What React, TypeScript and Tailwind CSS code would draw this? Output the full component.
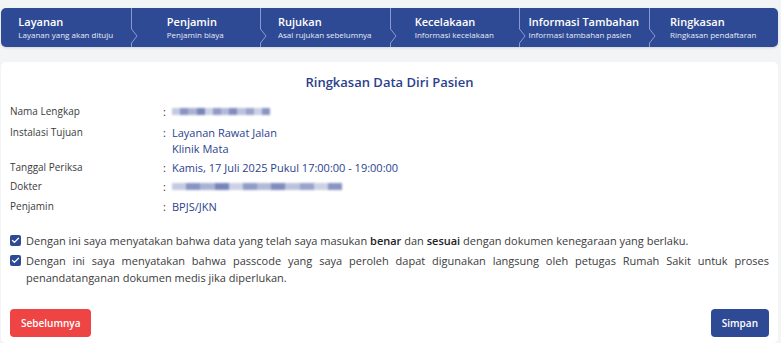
import { Check } from 'lucide-react';

const STEPS = [
  { title: 'Layanan', desc: 'Layanan yang akan dituju' },
  { title: 'Penjamin', desc: 'Penjamin biaya' },
  { title: 'Rujukan', desc: 'Asal rujukan sebelumnya' },
  { title: 'Kecelakaan', desc: 'Informasi kecelakaan' },
  { title: 'Informasi Tambahan', desc: 'Informasi tambahan pasien' },
  { title: 'Ringkasan', desc: 'Ringkasan pendaftaran' },
];

const Blurred = ({ width }: { width: number }) => {
  // blurred personal data placeholder
  const blocks = [0.35, 0.7, 0.5, 0.8, 0.3, 0.65, 0.45, 0.75, 0.4, 0.6, 0.3, 0.7];
  return (
    <div className="flex h-[7px] items-center blur-[1px]" style={{ width }}>
      {blocks.map((o, i) => (
        <div key={i} className="h-full flex-1 bg-[#5566a8]" style={{ opacity: o }} />
      ))}
    </div>
  );
};

const Row = ({ label, children, className = '' }: { label: string; children: React.ReactNode; className?: string }) => (
  <div className={`flex items-start ${className}`}>
    <div className="w-[153px] shrink-0 text-[10px] leading-[19px] text-[#3b3b3b]">{label}</div>
    <div className="w-[9px] shrink-0 text-[11px] leading-[19px] text-[#333]">:</div>
    <div className="flex min-h-[19px] flex-col justify-center text-[11px] font-medium leading-[19px] text-[#2b3f8e]">
      {children}
    </div>
  </div>
);

const CheckBox = () => (
  <span className="mt-[1px] flex h-[11px] w-[11px] shrink-0 items-center justify-center rounded-[2px] bg-[#2f4a94]">
    <Check className="h-[9px] w-[9px] text-white" strokeWidth={3.5} />
  </span>
);

export default function App() {
  return (
    <div className="min-h-[343px] bg-[#f3f4f6] px-[1px] pt-[8px] font-['Open_Sans',sans-serif]">
      {/* Stepper */}
      <div className="mr-[2px] flex h-[39px] overflow-hidden rounded-[5px] bg-[#2f4a94] shadow-sm">
        {STEPS.map((s, i) => (
          <div key={s.title} className="relative flex flex-1 items-center justify-center">
            {i > 0 && (
              <svg className="absolute left-0 top-0 h-[39px] w-[8px]" viewBox="0 0 8 39">
                <path d="M0.5 0 V21 L6 28 L0.5 35 V39" fill="none" stroke="#8a9ad0" strokeWidth="1" />
              </svg>
            )}
            <div className="text-left text-white">
              <div className="text-[11px] font-semibold leading-[14px]">{s.title}</div>
              <div className="text-[8px] leading-[11px] text-[#e6eaf7]">{s.desc}</div>
            </div>
          </div>
        ))}
      </div>

      {/* Card */}
      <div className="mr-[2px] mt-[15px] rounded-[5px] bg-white px-[9px] pb-[6px] pt-[11px]">
        <h2 className="text-center text-[13px] font-semibold leading-[18px] text-[#2b3f8e]">
          Ringkasan Data Diri Pasien
        </h2>

        <div className="mt-[11px] flex flex-col">
          <Row label="Nama Lengkap" className="mb-[2px]">
            <Blurred width={98} />
          </Row>
          <Row label="Instalasi Tujuan" className="pb-[2px]">
            <span>Layanan Rawat Jalan</span>
            <span className="leading-[14px]">Klinik Mata</span>
          </Row>
          <Row label="Tanggal Periksa">Kamis, 17 Juli 2025 Pukul 17:00:00 - 19:00:00</Row>
          <Row label="Dokter" className="mb-[1px]">
            <Blurred width={170} />
          </Row>
          <Row label="Penjamin">BPJS/JKN</Row>
        </div>

        <div className="mt-[16px] flex flex-col gap-[3px] text-[11px] leading-[17px] text-[#3b3b3b]">
          <label className="flex items-start gap-[5px]">
            <span className="pt-[2px]">
              <CheckBox />
            </span>
            <span>
              Dengan ini saya menyatakan bahwa data yang telah saya masukan <b className="font-semibold text-[#222]">benar</b> dan{' '}
              <b className="font-semibold text-[#222]">sesuai</b> dengan dokumen kenegaraan yang berlaku.
            </span>
          </label>
          <label className="flex items-start gap-[5px]">
            <span className="pt-[2px]">
              <CheckBox />
            </span>
            <span className="text-justify">
              Dengan ini saya menyatakan bahwa passcode yang saya peroleh dapat digunakan langsung oleh petugas Rumah Sakit untuk proses penandatanganan dokumen medis jika diperlukan.
            </span>
          </label>
        </div>

        <div className="mt-[23px] flex items-center justify-between">
          <button className="h-[28px] rounded-[4px] bg-[#ef4444] px-[11px] text-[10px] font-semibold text-white">
            Sebelumnya
          </button>
          <button className="h-[28px] rounded-[4px] bg-[#2f4a94] px-[11px] text-[10px] font-semibold text-white">
            Simpan
          </button>
        </div>
      </div>
    </div>
  );
}
